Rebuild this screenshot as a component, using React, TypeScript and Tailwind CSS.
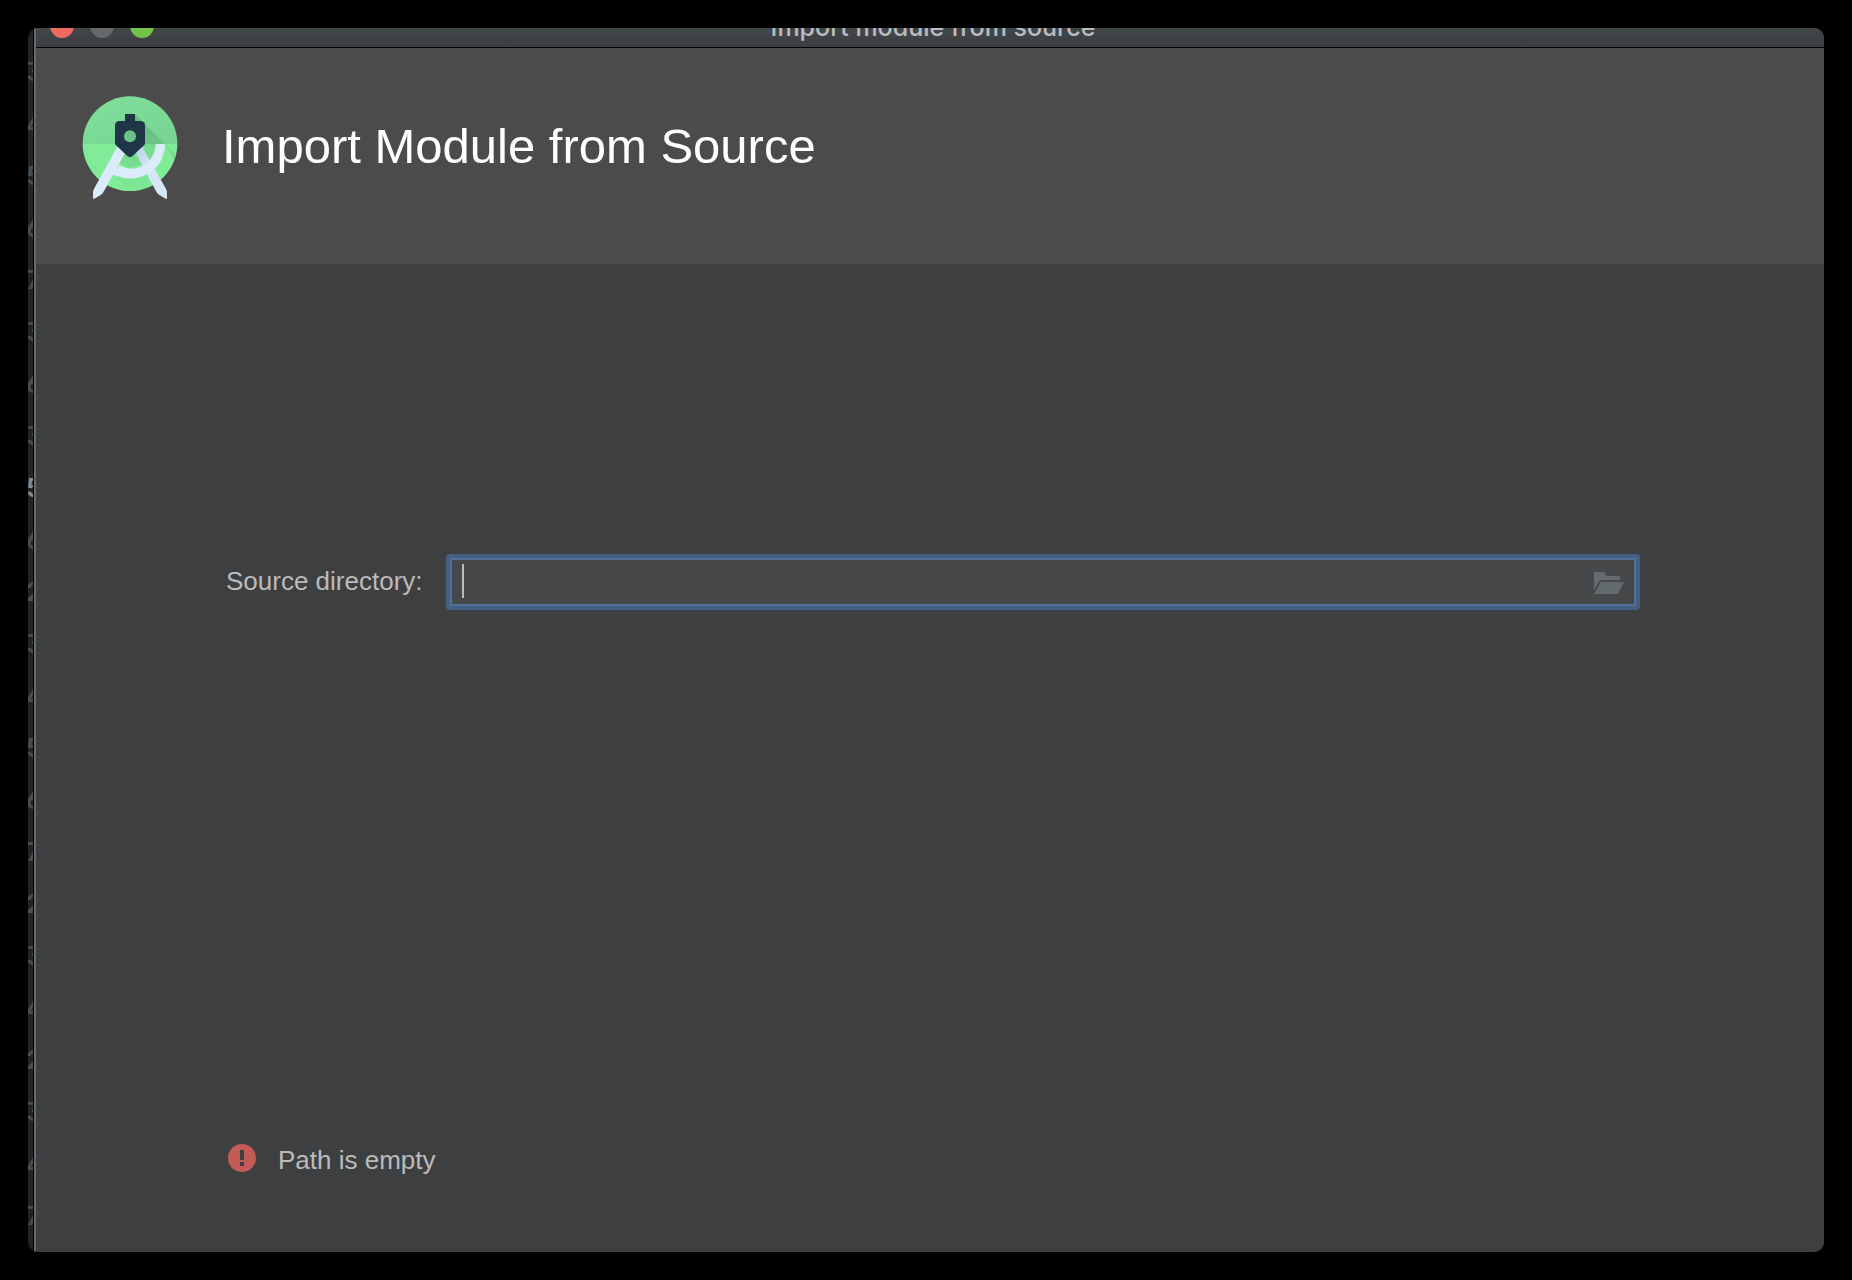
const GUTTER = "3 4 5 6 7 3 6 3 5 6 2 3 4 5 6 7 2 3 4 2 3 4 7".split(" ");
const CURRENT_LINE = 8;

function StudioLogo() {
  return (
    <svg className="h-[104px] w-24 shrink-0" viewBox="36 33 288 312" aria-hidden="true">
      <defs>
        <clipPath id="disc">
          <circle cx="180" cy="176" r="142" />
        </clipPath>
        <linearGradient id="top" x1="0" y1="0" x2="1" y2="1">
          <stop offset="0" stopColor="#7fe09b" />
          <stop offset="1" stopColor="#78d391" />
        </linearGradient>
        <linearGradient id="leg" x1="0" y1="0" x2="1" y2="1">
          <stop offset="0" stopColor="#b9d3e8" />
          <stop offset="0.5" stopColor="#d5e6f6" />
          <stop offset="1" stopColor="#d5e6f6" />
        </linearGradient>
        <linearGradient id="shade" x1="0" y1="0" x2="1" y2="1">
          <stop offset="0" stopColor="#4a9c6a" stopOpacity="0.5" />
          <stop offset="1" stopColor="#68bd82" stopOpacity="0.35" />
        </linearGradient>
      </defs>
      <g clipPath="url(#disc)">
        <rect x="36" y="33" width="288" height="144" fill="url(#top)" />
        <rect x="36" y="177" width="288" height="145" fill="#80ec98" />
        <path d="M195 88L325 218V240L292 190L285 177H225V110L195 108Z" fill="url(#shade)" />
        <path d="M135 177L150 192L140 230L180 248L240 230L262 177H225L180 216Z" fill="#6fcf8b" opacity="0.55" />
        <path d="M132 262Q180 292 232 264L250 325H180Z" fill="#6fd389" opacity="0.25" />
      </g>
      <path d="M197 203L215 183L287 310Q291 317 291 324V341H287L268 330Q262 326 259 320Z" fill="url(#leg)" />
      <path d="M257 177H285C285 244 228 284 176 280C158 279 142 275 127 267L148 240C160 247 171 251 182 251C224 251 257 218 257 177Z" fill="#dcebfa" />
      <path d="M143 183L164 206L101 320Q98 326 92 330L73 341H69V324Q69 317 73 310Z" fill="#dcebfa" />
      <path d="M165 87H195V108H211Q225 108 225 122V178L187 214Q180 219 173 214L135 178V122Q135 108 149 108H165Z" fill="#1f3647" />
      <circle cx="180" cy="154" r="18" fill="#6cc388" />
    </svg>
  );
}

function FolderIcon() {
  return (
    <svg className="h-[22px] w-[30px]" viewBox="0 0 30 22" fill="#636b6e" aria-hidden="true">
      <path d="M0 0H10L12 4H26V8H6L0 18Z" />
      <path d="M7 10H30L24 22H0Z" />
    </svg>
  );
}

function ErrorIcon() {
  return (
    <svg className="size-7 shrink-0" viewBox="0 0 28 28" aria-hidden="true">
      <circle cx="14" cy="14" r="14" fill="#c35c56" />
      <path d="M12 6H16V16H12ZM12 18H16V22H12Z" fill="#3e3f41" />
    </svg>
  );
}

export default function App() {
  return (
    <div className="flex min-h-screen bg-black p-7 font-['Liberation_Sans',Arial,sans-serif]">
      <div className="flex flex-1 overflow-hidden rounded-[10px] bg-[#232425]">
        <div
          aria-hidden="true"
          className="w-[6px] shrink-0 overflow-hidden border-r border-black pt-[18px] font-['Inter',sans-serif] text-[26px] font-semibold text-[#4c4e50] [font-feature-settings:'ss01','cv09']"
        >
          {GUTTER.map((digit, i) => (
            <div
              key={i}
              className={i === CURRENT_LINE ? "-ml-0.5 h-[52px] leading-[52px] text-[#8c8c8c]" : "-ml-0.5 h-[52px] leading-[52px]"}
            >
              {digit}
            </div>
          ))}
        </div>
        <main className="flex flex-1 flex-col border-l-2 border-[#68696a] bg-[#3e3f41]">
          <div className="flex h-5 items-end justify-center overflow-hidden border-b border-black bg-linear-to-b from-[#41464a] to-[#3a3e40]">
            <div className="flex flex-1 gap-4 self-start pl-[14px]">
              <button type="button" aria-label="Close" className="-mt-[14px] size-6 rounded-full bg-[#ee6a5f]" />
              <button type="button" aria-label="Minimize" className="-mt-[14px] size-6 rounded-full bg-[#66696b]" />
              <button type="button" aria-label="Zoom" className="-mt-[14px] size-6 rounded-full bg-[#73c348]" />
            </div>
            <span className="mb-1 whitespace-nowrap font-['Inter',sans-serif] text-[25px] leading-8 font-medium text-[#b9bdbf]">
              Import module from source
            </span>
            <div className="flex-1 pr-2" />
          </div>
          <header className="flex h-[216px] items-start gap-11 bg-[#4b4b4b] pt-12 pl-[46px]">
            <StudioLogo />
            <h1 className="pt-5 text-[49px] leading-[60px] text-white">Import Module from Source</h1>
          </header>
          <form className="flex flex-1 flex-col pr-[184px] pb-[76px] pl-[190px]">
            <div className="flex items-center gap-[23px] pt-[290px]">
              <label htmlFor="source" className="pb-0.5 text-[26px] leading-8 whitespace-nowrap text-[#bbbbbb]">
                Source directory:
              </label>
              <div className="relative flex h-14 flex-1 items-center rounded bg-[#466083] p-1">
                <input
                  id="source"
                  type="text"
                  className="h-full w-full border-2 border-[#50719a] bg-[#46484a] pr-14 pl-3 text-[26px] text-[#bbbbbb] caret-transparent outline-none"
                />
                <span className="absolute top-[10px] left-4 h-[34px] w-[2px] bg-[#bbbbbb]" />
                <button type="button" aria-label="Browse" className="absolute top-[18px] right-4">
                  <FolderIcon />
                </button>
              </div>
            </div>
            <p className="mt-auto flex h-8 items-start gap-[22px] pl-[2px] text-[26px] leading-8 text-[#bbbbbb]">
              <ErrorIcon />
              <span>Path is empty</span>
            </p>
          </form>
        </main>
      </div>
    </div>
  );
}
